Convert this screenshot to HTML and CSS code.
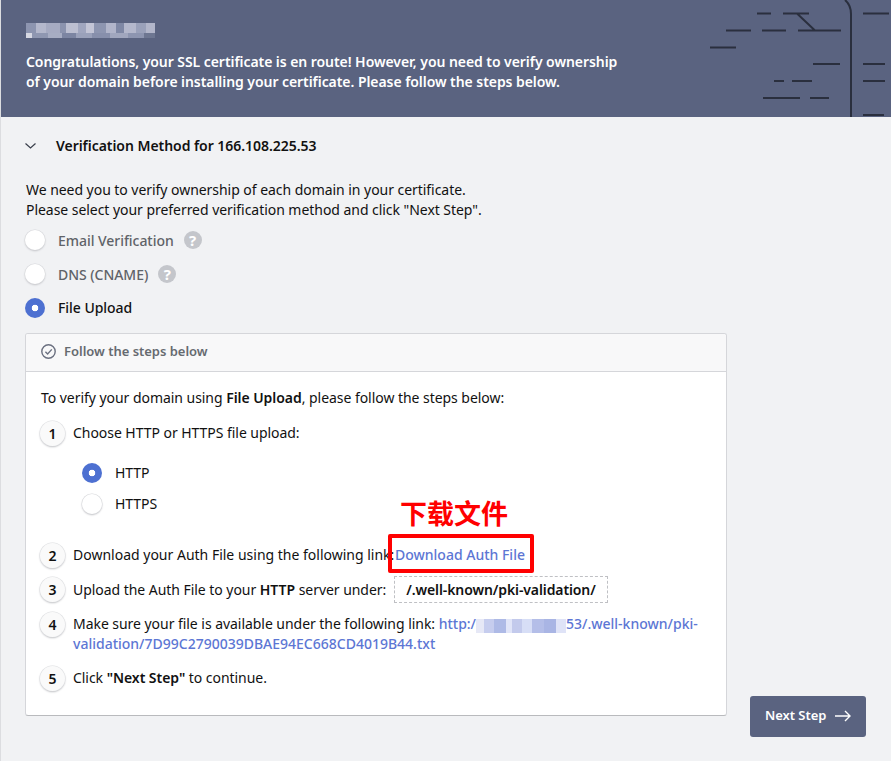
FILE: index.html
```html
<!DOCTYPE html>
<html lang="en">
<head>
<meta charset="utf-8">
<title>Verify domain</title>
<link rel="stylesheet" href="styles.css">
</head>
<body>
<header class="banner">
  <svg class="banner-art" width="200" height="117" viewBox="691 0 200 117" fill="none" stroke="#2a2f3e" stroke-width="2">
    <path d="M757 13.5h14M783 13.5h26M863 13.5h26M726 30.5h25M762 30.5h24M798 30.5h43M797 13.5l18 17M710 47.5h26M813 64h27M863 64h22M774 81h10M792 81h20M863 81h22M763 98h37M810 98h19M863 115h21"/>
    <path d="M845 0q6 5 6 14v103"/>
  </svg>
  <h1 class="banner-title"><span class="mosaic">166.108.225.53</span></h1>
  <p class="banner-text">Congratulations, your SSL certificate is en route! However, you need to verify ownership<br>of your domain before installing your certificate. Please follow the steps below.</p>
</header>
<main class="content">
  <div class="section-head">
    <svg class="chevron" width="11" height="6" viewBox="0 0 11 6" fill="none" stroke="#3a3f4b" stroke-width="1.2"><path d="M.5.5l5 4.5 5-4.5"/></svg>
    <h2 class="section-title">Verification Method for 166.108.225.53</h2>
  </div>
  <p class="intro">We need you to verify ownership of each domain in your certificate.<br>Please select your preferred verification method and click "Next Step".</p>
  <div class="methods">
    <div class="method"><span class="radio"></span><span class="method-label">Email Verification</span><span class="help">?</span></div>
    <div class="method"><span class="radio"></span><span class="method-label">DNS (CNAME)</span><span class="help">?</span></div>
    <div class="method"><span class="radio checked"></span><span class="method-label active">File Upload</span></div>
  </div>
  <div class="lower">
    <section class="card">
      <div class="card-head">
        <svg width="15" height="15" viewBox="0 0 15 15" fill="none" stroke="#6b7080" stroke-width="1.4"><circle cx="7.5" cy="7.5" r="6.7"/><path d="M4.4 7.8l2.2 2.2 4.2-4.6"/></svg>
        <span class="card-title">Follow the steps below</span>
      </div>
      <div class="card-body">
        <p class="lead">To verify your domain using <b>File Upload</b>, please follow the steps below:</p>
        <div class="step step-1"><span class="num">1</span><span>Choose HTTP or HTTPS file upload:</span></div>
        <div class="protos">
          <div class="proto"><span class="radio checked"></span><span>HTTP</span></div>
          <div class="proto"><span class="radio"></span><span>HTTPS</span></div>
        </div>
        <div class="step step-2"><span class="num">2</span><span>Download your Auth File using the following link: <a class="link link-tight" href="#">Download Auth File</a></span></div>
        <div class="step step-3"><span class="num">3</span><span>Upload the Auth File to your <b>HTTP</b> server under:</span><code class="path">/.well-known/pki-validation/</code></div>
        <div class="step step-4"><span class="num">4</span><span>Make sure your file is available under the following link: <a class="link" href="#">http:/<span class="mosaic-link">166.108.225.</span>53/.well-known/pki-validation/7D99C2790039DBAE94EC668CD4019B44.txt</a></span></div>
        <div class="step step-5"><span class="num">5</span><span>Click <b>"Next Step"</b> to continue.</span></div>
      </div>
    </section>
    <button class="next" type="button">Next Step
      <svg width="16" height="12" viewBox="0 0 16 12" fill="none" stroke="#fff" stroke-width="1.4"><path d="M0 6h15M10 1l5 5-5 5"/></svg>
    </button>
  </div>
</main>
<div class="note-label">下载文件</div>
<div class="note-box"></div>
</body>
</html>
```
FILE: styles.css
```css
* { box-sizing: border-box; }
html, body { margin: 0; height: 761px; overflow: hidden; }
body {
  background: #f1f2f4;
  color: #111;
  font: 14px/20px "Noto Sans", "Open Sans", sans-serif;
  letter-spacing: -.045px;
  position: relative;
  border-left: 1px solid #dcdde0;
}
b { font-weight: 600; }
p, h1, h2 { margin: 0; }

.banner {
  position: relative;
  height: 117px;
  padding: 23px 25px 0;
  background: #5a6380;
  color: #fff;
  overflow: hidden;
}
.banner-art { position: absolute; right: 0; top: 0; }
.banner-title { height: 15px; margin-bottom: 14px; font-size: 14px; line-height: 15px; font-weight: 600; }
.mosaic {
  display: block;
  width: 129px;
  height: 15px;
  color: transparent;
  background:
    linear-gradient(90deg, #8d95b0 0 10px, #b4b8cc 10px 20px, #a6abc2 20px 34px, #8b93ae 34px 40px, #bcbfd1 40px 52px, #a0a6bf 52px 60px, #c3c5d6 60px 68px, #8d95b0 68px 80px, #b1b5ca 80px 90px, #7f88a5 90px 98px, #b4b8cc 98px 110px, #9aa1ba 110px 120px, #b2b6ca 120px 129px) 0 0 / 100% 10px no-repeat,
    linear-gradient(90deg, #d6d8e3 0 6px, #8f97b1 6px 22px, #a7adc3 22px 36px, #7c85a2 36px 50px, #9aa1ba 50px 66px, #878fab 66px 84px, #a1a7be 84px 102px, #8d95b0 102px 118px, #6d7691 118px 129px) 0 10px / 100% 5px no-repeat;
}
.banner-text { font-weight: 600; letter-spacing: -.06px; }

.content { height: 644px; padding: 19px 25px 0 24px; }
.section-head { display: flex; align-items: center; height: 20px; }
.chevron { margin-right: 20px; flex: none; }
.section-title { font-size: 14px; font-weight: 600; line-height: 20px; color: #111; }
.intro { margin-top: 24px; margin-left: 1px; color: #111; }

.methods { display: flex; flex-direction: column; gap: 14px; margin-top: 10px; }
.method { display: flex; align-items: center; height: 20px; }
.radio {
  flex: none;
  width: 20px;
  height: 20px;
  border-radius: 50%;
  background: #fff;
  box-shadow: 0 0 0 .5px #d8d9dc, 0 1px 2px #b9babe;
}
.radio.checked {
  background: radial-gradient(circle, #fff 0 3px, #4d70d1 3.6px);
  box-shadow: none;
}
.method-label { margin-left: 13px; font-weight: 500; color: #5f6368; position: relative; top: 1px; }
.method-label.active { color: #111; top: 0; }
.help {
  width: 18px;
  height: 18px;
  margin-left: 10px;
  border-radius: 50%;
  background: #c4c6cb;
  color: #fff;
  font-size: 15px;
  font-weight: 700;
  line-height: 18px;
  text-align: center;
}

.lower { display: flex; align-items: flex-end; margin-top: 15px; }
.card {
  flex: none;
  width: 702px;
  height: 383px;
  margin-bottom: 21px;
  background: #fff;
  border: 1px solid #d5d6da;
  border-bottom-color: #b9babd;
  border-radius: 3px;
  overflow: hidden;
}
.card-head {
  display: flex;
  align-items: center;
  gap: 8px;
  height: 38px;
  padding: 0 0 2px 15px;
  background: #f8f8f9;
  border-bottom: 1px solid #d5d6da;
  color: #666a70;
  font-size: 13px;
  font-weight: 600;
  letter-spacing: -.02px;
}
.card-title { margin-top: -2px; }
.card-body { padding: 16px 15px 0; }
.lead { color: #111; }
.step { display: flex; align-items: flex-start; gap: 8px; color: #111; }
.num {
  flex: none;
  width: 25px;
  height: 25px;
  margin: -2px 0 0 -1px;
  border-radius: 50%;
  background: #fafafa;
  box-shadow: 0 0 0 .5px #dedfe2, 0 1px 2px #b5b6ba;
  color: #111;
  font-weight: 600;
  line-height: 25px;
  text-align: center;
}
.step-1 { margin-top: 15px; }
.protos { display: flex; flex-direction: column; gap: 11px; margin: 17px 0 0 41px; }
.proto { display: flex; align-items: center; gap: 13px; height: 20px; color: #111; }
.step-2 { margin-top: 31px; letter-spacing: 0; }
.step-3 { margin-top: 8px; align-items: center; }
.step-3 .num { margin-top: 0; }
.step-4 { margin-top: 11px; }
.step-5 { margin-top: 14px; }
.path {
  height: 27px;
  padding: 2px 11px;
  border: 1px dashed #bfc0c4;
  font: 600 14px/21px "Noto Sans", sans-serif;
  letter-spacing: -.1px;
  color: #111;
}
.link { color: #5c76d4; font-weight: 500; text-decoration: none; letter-spacing: 0; }
.link-tight { margin-left: -3px; }
.mosaic-link {
  display: inline-block;
  width: 90px;
  height: 14px;
  vertical-align: -2px;
  font-size: 13px;
  line-height: 14px;
  color: transparent;
  background: linear-gradient(90deg, #e6e8f6 0 8px, #c6cdee 8px 18px, #aebae6 18px 30px, #e1e5f8 30px 36px, #c3caec 36px 46px, #d7def6 46px 56px, #b4bee8 56px 68px, #a9b5e4 68px 80px, #dfe3f7 80px 90px);
}

.next {
  display: flex;
  align-items: center;
  justify-content: space-between;
  width: 116px;
  height: 41px;
  margin-left: 23px;
  padding: 0 15px 3px;
  background: #5a6380;
  border: 0;
  border-radius: 3px;
  color: #fff;
  font: 600 13px/20px "Noto Sans", sans-serif;
  letter-spacing: -.05px;
}
.next svg { position: relative; top: 1px; }

.note-label {
  position: absolute;
  left: 399px;
  top: 496px;
  color: #f00;
  font: 700 27px/34px "Noto Sans CJK SC", sans-serif;
  letter-spacing: 0;
}
.note-box {
  position: absolute;
  left: 387px;
  top: 534px;
  width: 146px;
  height: 39px;
  border: 4px solid #f00;
  border-radius: 2px;
}
```
